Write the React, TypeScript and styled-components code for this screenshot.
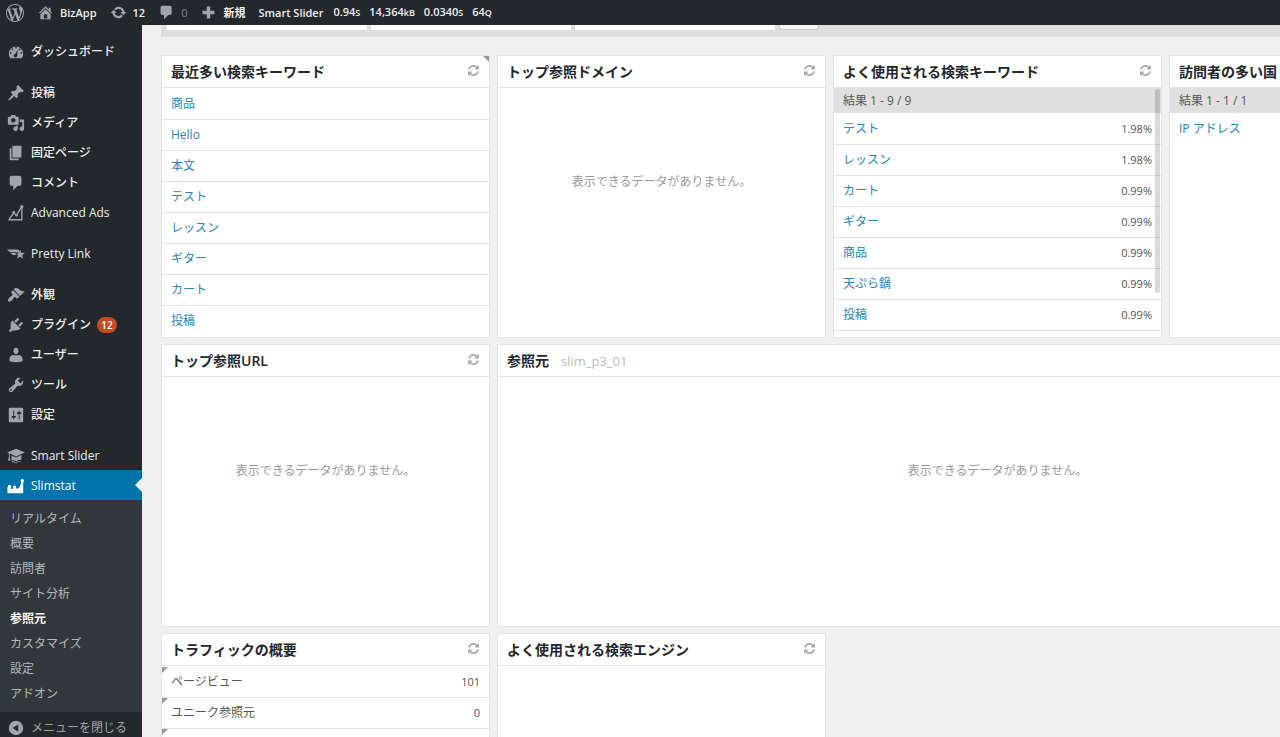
import React from 'react';
import styled, { createGlobalStyle, css } from 'styled-components';

const Global = createGlobalStyle`
  *, *::before, *::after { box-sizing: border-box; }
  html, body, #root { height: 100%; }
  body {
    margin: 0;
    background: #f0f0f0;
    color: #555;
    font: 12px/18px "Open Sans", "Noto Sans CJK JP", sans-serif;
    overflow: hidden;
  }
  ul, h2, p { margin: 0; padding: 0; list-style: none; }
  a { text-decoration: none; color: inherit; }
  button { font: inherit; color: inherit; background: none; border: 0; padding: 0; cursor: pointer; }
`;

const Page = styled.div`
  display: flex;
  flex-direction: column;
  height: 100vh;
`;

const AdminBar = styled.nav`
  flex: none;
  display: flex;
  align-items: center;
  height: 25px;
  padding-left: 6px;
  background: #23282d;
  color: #eee;
  font-weight: 600;
  font-size: 11px;
  white-space: nowrap;
`;

const BarLink = styled.a<{ $gap?: number; $dim?: boolean }>`
  display: flex;
  align-items: center;
  gap: 6px;
  height: 25px;
  margin-right: ${(p) => p.$gap ?? 13}px;
  ${(p) => p.$dim && css`color: #82878c; font-weight: 400;`}
`;

const Stats = styled.a`
  display: flex;
  gap: 9px;
  small { font-size: 9px; }
`;

const Glyph = styled.svg<{ $size?: number }>`
  flex: none;
  display: block;
  width: ${(p) => p.$size ?? 18}px;
  height: ${(p) => p.$size ?? 18}px;
  fill: currentColor;
  color: ${(p) => p.color ?? '#a0a5aa'};
`;

const Body = styled.div`
  flex: 1;
  min-height: 0;
  display: flex;
`;

const Sidebar = styled.nav`
  flex: none;
  width: 142px;
  padding-top: 11px;
  background: #23282d;
  color: #eee;
  overflow: hidden;
`;

const MenuGroup = styled.ul`
  margin-bottom: 11px;
  &:last-child { margin-bottom: 0; }
`;

const MenuLink = styled.a<{ $active?: boolean }>`
  position: relative;
  display: flex;
  align-items: center;
  gap: 6px;
  height: 30px;
  padding: 2px 0 0 7px;
  font-weight: 500;
  white-space: nowrap;
  ${(p) =>
    p.$active &&
    css`
      background: #0073aa;
      color: #fff;
      &::after {
        content: '';
        position: absolute;
        right: 0;
        top: 8px;
        border: 7px solid transparent;
        border-left-width: 0;
        border-right-color: #f0f0f0;
      }
    `}
`;

const Badge = styled.span`
  min-width: 20px;
  height: 16px;
  border-radius: 8px;
  background: #ca4a1f;
  color: #fff;
  font-size: 10px;
  font-weight: 600;
  line-height: 16px;
  text-align: center;
`;

const SubMenu = styled.ul`
  padding: 6px 0 6px 10px;
  background: #32373c;
  color: #b4b9be;
`;

const SubLink = styled.a<{ $current?: boolean }>`
  display: block;
  line-height: 25px;
  ${(p) => p.$current && css`color: #fff; font-weight: 700;`}
`;

const Collapse = styled.button`
  display: flex;
  align-items: center;
  gap: 6px;
  width: 100%;
  height: 32px;
  padding-left: 7px;
  color: #a0a5aa;
  white-space: nowrap;
`;

const Content = styled.main`
  flex: 1;
  min-width: 0;
  padding-left: 19px;
  overflow: hidden;
`;

const FilterBar = styled.form`
  display: flex;
  align-items: flex-start;
  gap: 4px;
  height: 12px;
  padding-left: 6px;
  margin-bottom: 18px;
  background: #dfdfdf;
`;

const FilterField = styled.input`
  width: 200px;
  height: 5px;
  border: 0;
  background: #fff;
`;

const FilterButton = styled.button`
  width: 40px;
  height: 5px;
  border: 1px solid #ccc;
  border-top: 0;
  border-radius: 0 0 3px 3px;
  background: #f7f7f7;
`;

const Board = styled.div`
  display: grid;
  grid-template-columns: repeat(4, 329px);
  grid-auto-rows: 283px;
  gap: 6px 7px;
`;

const Card = styled.section<{ $wide?: boolean }>`
  position: relative;
  display: flex;
  flex-direction: column;
  border: 1px solid #e5e5e5;
  background: #fff;
  overflow: hidden;
  grid-column: span ${(p) => (p.$wide ? 3 : 1)};
`;

const CardHead = styled.header`
  flex: none;
  display: flex;
  align-items: center;
  justify-content: space-between;
  height: 32px;
  padding: 0 10px 0 9px;
  border-bottom: 1px solid #e5e5e5;
`;

const CardTitle = styled.h2`
  font-size: 14px;
  line-height: 20px;
  font-weight: 600;
  color: #23282d;
  white-space: nowrap;
  span { margin-left: 12px; font-size: 13px; color: #bbb; font-weight: 500; }
`;

const Refresh = styled.button`
  padding-bottom: 3px;
`;

const Corner = styled.i<{ $left?: boolean }>`
  position: absolute;
  top: 0;
  ${(p) => (p.$left ? 'left: 0;' : 'right: 0;')}
  border-top: 6px solid #999;
  ${(p) => (p.$left ? 'border-right' : 'border-left')}: 6px solid transparent;
`;

const Results = styled.p`
  flex: none;
  height: 25px;
  padding-left: 9px;
  line-height: 25px;
  background: #dfdfdf;
`;

const Empty = styled.p`
  margin-top: 85px;
  text-align: center;
  color: #999;
`;

const Rows = styled.ul`
  padding-top: 1px;
`;

const Row = styled.li`
  position: relative;
  display: flex;
  justify-content: space-between;
  height: 31px;
  padding: 0 9px;
  border-bottom: 1px solid #e5e5e5;
  line-height: 30px;
  a { color: #2a84b7; }
  &:only-child, &:nth-child(8) { border-bottom: 0; }
`;

const Value = styled.span`
  font-size: 11px;
`;

const Scroll = styled.i`
  position: absolute;
  top: 33px;
  right: 1px;
  width: 5px;
  height: 204px;
  border-radius: 3px;
  background: rgba(0, 0, 0, 0.15);
`;

type IconName = keyof typeof paths;

/* Drawn on a 20-unit grid */
const paths = {
  dashboard: 'M3.76 17h12.48A8 8 0 1 0 3.76 17zM10 4a1 1 0 1 1 0 2 1 1 0 0 1 0-2zM6 6a1 1 0 1 1 0 2 1 1 0 0 1 0-2zm8 0a1 1 0 1 1 0 2 1 1 0 0 1 0-2zm-2.6 7.4a2 2 0 1 1-1.9-1.4l2.5-5-.6 5.5c.3.3.2.6 0 .9zM4 10a1 1 0 1 1 0 2 1 1 0 0 1 0-2zm12 0a1 1 0 1 1 0 2 1 1 0 0 1 0-2z',
  pin: 'M10.44 3.02l1.82-1.82 6.36 6.35-1.83 1.82c-1.05-.68-2.48-.57-3.41.36l-.75.75c-.92.93-1.04 2.35-.35 3.41l-1.83 1.82-2.41-2.41-2.8 2.79c-.42.42-3.38 2.71-3.8 2.29s1.86-3.39 2.28-3.81l2.79-2.79L4.1 9.36l1.83-1.82c1.05.69 2.48.57 3.4-.36l.75-.75c.93-.92 1.05-2.35.36-3.41z',
  media: 'M13 11V4c0-.55-.45-1-1-1h-1.67L9 1H5L3.67 3H2c-.55 0-1 .45-1 1v7c0 .55.45 1 1 1h10c.55 0 1-.45 1-1zM7 4.5c1.38 0 2.5 1.12 2.5 2.5S8.38 9.5 7 9.5 4.5 8.38 4.5 7 5.62 4.5 7 4.5zM14 6h5v10.5c0 1.38-1.12 2.5-2.5 2.5S14 17.88 14 16.5s1.12-2.5 2.5-2.5c.17 0 .34.02.5.05V9h-3V6zm-4 8.05V13h2v3.5c0 1.38-1.12 2.5-2.5 2.5S7 17.88 7 16.5 8.12 14 9.5 14c.17 0 .34.02.5.05z',
  pages: 'M6 15V2h10v13H6zm-1 1h8v2H3V5h2v11z',
  comment: 'M5 2h9c1.1 0 2 .9 2 2v7c0 1.1-.9 2-2 2h-2l-5 5v-5H5c-1.1 0-2-.9-2-2V4c0-1.1.9-2 2-2z',
  brush: 'M14.48 11.06L7.41 3.99l1.5-1.5c.5-.56 2.3-.47 3.51.32 1.21.8 1.43 1.28 2.91 2.1 1.18.64 2.45 1.26 4.45.85zm-.71.71L6.7 4.7 4.93 6.47c-.39.39-.39 1.02 0 1.41l1.06 1.06c.39.39.39 1.03 0 1.42-.6.6-1.43 1.11-2.21 1.69-.35.26-.7.53-1.01.84C1.43 14.23.4 16.08 1.4 17.07c.99 1 2.84-.03 4.18-1.36.31-.31.58-.66.85-1.02.57-.78 1.08-1.61 1.69-2.21.39-.39 1.02-.39 1.41 0l1.06 1.06c.39.39 1.02.39 1.41 0z',
  plug: 'M13.11 4.36L9.87 7.6 8 5.73l3.24-3.24c.35-.34 1.05-.2 1.56.32.52.51.66 1.21.31 1.55zm-8 1.77l.91-1.12 9.01 9.01-1.19.84c-.71.71-2.63 1.16-3.82 1.16H6.14L4.9 17.26c-.59.59-1.54.59-2.12 0-.59-.58-.59-1.53 0-2.12l1.24-1.24v-3.88c0-1.13.4-3.19 1.09-3.89zm7.26 3.97l3.24-3.24c.34-.35 1.04-.21 1.55.31.52.51.66 1.21.31 1.55l-3.24 3.25z',
  user: 'M10 9.25c-2.27 0-2.73-3.44-2.73-3.44C7 4.02 7.82 2 9.97 2c2.16 0 2.98 2.02 2.71 3.81 0 0-.41 3.44-2.68 3.44zm0 1.2L12.72 10c2.39 0 4.52 2.33 4.52 4.53v2.49s-3.65 1.13-7.24 1.13c-3.65 0-7.24-1.13-7.24-1.13v-2.49c0-2.25 1.94-4.48 4.47-4.48z',
  wrench: 'M16.68 9.77c-1.34 1.34-3.3 1.67-4.95.99l-5.41 6.52c-.99.99-2.59.99-3.58 0s-.99-2.59 0-3.57l6.52-5.42c-.68-1.65-.35-3.61.99-4.95 1.28-1.28 3.12-1.62 4.72-1.06l-2.89 2.89 2.82 2.82 2.86-2.87c.53 1.58.18 3.39-1.08 4.65zM3.81 16.21c.4.39 1.04.39 1.43 0 .4-.4.4-1.04 0-1.43-.39-.4-1.03-.4-1.43 0-.39.39-.39 1.03 0 1.43z',
  sliders: 'M18 17V3c0-.55-.45-1-1-1H3c-.55 0-1 .45-1 1v14c0 .55.45 1 1 1h14c.55 0 1-.45 1-1zM8 11h1c.55 0 1 .45 1 1s-.45 1-1 1H8v1.5c0 .28-.22.5-.5.5s-.5-.22-.5-.5V13H6c-.55 0-1-.45-1-1s.45-1 1-1h1V5.5c0-.28.22-.5.5-.5s.5.22.5.5V11zm5-2h-1c-.55 0-1-.45-1-1s.45-1 1-1h1V5.5c0-.28.22-.5.5-.5s.5.22.5.5V7h1c.55 0 1 .45 1 1s-.45 1-1 1h-1v5.5c0 .28-.22.5-.5.5s-.5-.22-.5-.5V9z',
  cap: 'M10 2L0 6l2 .9v4.6L1 15h3l-1-3.5V7.3l7 3.2 10-4.5zM5 9.5V15c3-1 5 0 5.5 1.5C11 15 13.5 13.8 16 14.5V9l-6 2.8zM5.5 16c2-.5 3.5 0 4.5 1.7 1.2-1.7 3-2.2 5-1.9v1c-2-.3-3.8.3-5 1.7-1-1.3-2.5-1.8-4.5-1.5z',
  wing: 'M0 5h10.5c1.6 0 2.6.5 3.2 1.5l-.6 1.6H3.4zM4 9h8.6l-.3.8H9l1.4 1.2H6.2zM14.6 5.2l1.4 3.4 3.9.3-3 2.4 1 3.9-3.3-2.1-3.4 2.1 1-3.8-2.9-2.5 3.9-.3z',
  slim: 'M1 10.5a1.9 1.9 0 1 1 3 1.6c.8 1.4 1.6 1.6 2.6.6L7 12c-.6-1.400.2-2.600 1.400-2.600 1.600 0 2.100 1.600 1.300 2.600.8 1.200 2 1.400 3 .6 1.600-1.400 2.800-4.200 3.100-7A1.900 1.900 0 1 1 18 5.800V18H.5v-6.200z',
  home: 'M16 8.5l1.53 1.53-1.06 1.06L10 4.6l-6.47 6.49-1.06-1.06L10 2.500l4 4v-2h2v4zm-6-2.46l6 5.99V18H4v-5.97zM12 17v-5H8v5h4z',
  update: 'M10.2 3.28c3.53 0 6.43 2.61 6.92 6h2.08l-3.5 4-3.5-4h2.32c-.45-1.97-2.21-3.45-4.32-3.45-1.45 0-2.73.71-3.54 1.78L4.95 5.66C6.23 4.2 8.11 3.28 10.2 3.28zm-.4 13.44c-3.52 0-6.43-2.61-6.92-6H.8l3.5-4c1.17 1.33 2.33 2.67 3.5 4H5.48c.45 1.97 2.21 3.45 4.32 3.45 1.45 0 2.73-.71 3.54-1.78l1.71 1.95c-1.28 1.46-3.15 2.38-5.25 2.38z',
  plus: 'M17 8v4h-5v5H8v-5H3V8h5V3h4v5z',
  collapse: 'M10 2a8 8 0 1 0 0 16 8 8 0 0 0 0-16zm2.500 4v8L6 10z',
  wordpress: 'M20 10c0-5.51-4.49-10-10-10C4.48 0 0 4.49 0 10c0 5.52 4.48 10 10 10 5.51 0 10-4.48 10-10zM7.78 15.37L4.37 6.22c.55-.02 1.17-.08 1.17-.08.5-.06.44-1.13-.06-1.11 0 0-1.45.11-2.37.11-.18 0-.37 0-.58-.01C4.12 2.69 6.87 1.11 10 1.11c2.33 0 4.45.87 6.05 2.34-.68-.11-1.65.39-1.65 1.58 0 .74.45 1.36.9 2.1.35.61.55 1.36.55 2.46 0 1.49-1.4 5-1.4 5l-3.03-8.37c.54-.02.82-.17.82-.17.5-.05.44-1.25-.06-1.22 0 0-1.44.12-2.38.12-.87 0-2.33-.12-2.33-.12-.5-.03-.56 1.2-.06 1.22l.92.08 1.26 3.41zM17.41 10c.24-.64.74-1.87.43-4.25.7 1.29 1.05 2.71 1.05 4.25 0 3.29-1.73 6.24-4.4 7.78.97-2.59 1.94-5.2 2.92-7.78zM6.1 18.09C3.12 16.65 1.11 13.53 1.11 10c0-1.3.23-2.48.72-3.59C3.25 10.3 4.67 14.2 6.1 18.09zm4.03-6.63l2.58 6.98c-.86.29-1.76.45-2.71.45-.79 0-1.57-.11-2.29-.33.81-2.38 1.62-4.74 2.42-7.1z',
};

const Icon = ({ name, size, color }: { name: IconName; size?: number; color?: string }) => (
  <Glyph viewBox="0 0 20 20" $size={size} color={color} aria-hidden="true">
    <path d={paths[name]} fillRule="evenodd" />
  </Glyph>
);

const AdsIcon = () => (
  <Glyph viewBox="0 0 20 20" $size={18} aria-hidden="true">
    <path d="M16.5 4v13.500H2.500L3 16l4.500-6 3 2.500L16.500 3" fill="none" stroke="currentColor" strokeWidth="1.5" />
    <circle cx="16.5" cy="3" r="1.8" />
    <circle cx="7.5" cy="9.5" r="1.6" />
    <circle cx="10.5" cy="12.5" r="1.5" />
  </Glyph>
);

const RefreshButton = () => (
  <Refresh type="button" aria-label="更新">
    <Glyph viewBox="0 0 1536 1536" $size={11} color="#aaa" aria-hidden="true">
      <path d="M1511 928q0 5-1 7-64 268-268 434.500T764 1536q-146 0-282.500-55T238 1324l-129 129q-19 19-45 19t-45-19-19-45V960q0-26 19-45t45-19h448q26 0 45 19t19 45-19 45l-137 137q71 66 161 102t187 36q134 0 250-65t186-179q11-17 53-117 8-23 30-23h192q13 0 22.500 9.500t9.500 22.500zm25-800v448q0 26-19 45t-45 19h-448q-26 0-45-19t-19-45 19-45l138-138Q969 256 768 256q-134 0-250 65T332 500q-11 17-53 117-8 23-30 23H50q-13 0-22.500-9.500T18 608v-7q65-268 270-434.500T768 0q146 0 284 55.500T1297 212l130-129q19-19 45-19t45 19 19 45z" />
    </Glyph>
  </Refresh>
);

const groups: { label: string; icon: IconName | 'ads'; badge?: number; active?: boolean }[][] = [
  [{ label: 'ダッシュボード', icon: 'dashboard' }],
  [
    { label: '投稿', icon: 'pin' },
    { label: 'メディア', icon: 'media' },
    { label: '固定ページ', icon: 'pages' },
    { label: 'コメント', icon: 'comment' },
    { label: 'Advanced Ads', icon: 'ads' },
  ],
  [{ label: 'Pretty Link', icon: 'wing' }],
  [
    { label: '外観', icon: 'brush' },
    { label: 'プラグイン', icon: 'plug', badge: 12 },
    { label: 'ユーザー', icon: 'user' },
    { label: 'ツール', icon: 'wrench' },
    { label: '設定', icon: 'sliders' },
  ],
  [
    { label: 'Smart Slider', icon: 'cap' },
    { label: 'Slimstat', icon: 'slim', active: true },
  ],
];

const submenu = ['リアルタイム', '概要', '訪問者', 'サイト分析', '参照元', 'カスタマイズ', '設定', 'アドオン'];
const recent = ['商品', 'Hello', '本文', 'テスト', 'レッスン', 'ギター', 'カート', '投稿'];
const popular = [
  ['テスト', '1.98%'],
  ['レッスン', '1.98%'],
  ['カート', '0.99%'],
  ['ギター', '0.99%'],
  ['商品', '0.99%'],
  ['天ぷら鍋', '0.99%'],
  ['投稿', '0.99%'],
];
const traffic = [
  ['ページビュー', '101'],
  ['ユニーク参照元', '0'],
];

const Report = ({ title, note, wide, corner, children }: {
  title: string;
  note?: string;
  wide?: boolean;
  corner?: boolean;
  children?: React.ReactNode;
}) => (
  <Card $wide={wide}>
    <CardHead>
      <CardTitle>
        {title}
        {note && <span>{note}</span>}
      </CardTitle>
      <RefreshButton />
    </CardHead>
    {corner && <Corner />}
    {children}
  </Card>
);

const NoData = () => <Empty>表示できるデータがありません。</Empty>;

export default function App() {
  return (
    <Page>
      <Global />
      <AdminBar>
        <BarLink href="#" aria-label="WordPress"><Icon name="wordpress" /></BarLink>
        <BarLink href="#"><Icon name="home" size={17} />BizApp</BarLink>
        <BarLink href="#"><Icon name="update" size={17} />12</BarLink>
        <BarLink href="#" $dim><Icon name="comment" size={17} />0</BarLink>
        <BarLink href="#"><Icon name="plus" size={17} />新規</BarLink>
        <BarLink href="#" $gap={10}>Smart Slider</BarLink>
        <Stats href="#">
          <span>0.94<small>S</small></span>
          <span>14,364<small>kB</small></span>
          <span>0.0340<small>S</small></span>
          <span>64<small>Q</small></span>
        </Stats>
      </AdminBar>
      <Body>
        <Sidebar>
          {groups.map((items, i) => (
            <MenuGroup key={i}>
              {items.map((item) => (
                <li key={item.label}>
                  <MenuLink href="#" $active={item.active}>
                    {item.icon === 'ads' ? <AdsIcon /> : <Icon name={item.icon} color={item.active ? '#fff' : undefined} />}
                    {item.label}
                    {item.badge && <Badge>{item.badge}</Badge>}
                  </MenuLink>
                  {item.active && (
                    <SubMenu>
                      {submenu.map((s) => (
                        <li key={s}><SubLink href="#" $current={s === '参照元'}>{s}</SubLink></li>
                      ))}
                    </SubMenu>
                  )}
                </li>
              ))}
              {i === groups.length - 1 && (
                <li><Collapse type="button"><Icon name="collapse" />メニューを閉じる</Collapse></li>
              )}
            </MenuGroup>
          ))}
        </Sidebar>
        <Content>
          <FilterBar>
            <FilterField aria-label="フィルター" />
            <FilterField aria-label="条件" />
            <FilterField aria-label="値" />
            <FilterButton type="button" aria-label="適用" />
          </FilterBar>
          <Board>
            <Report title="最近多い検索キーワード" corner>
              <Rows>{recent.map((k) => <Row key={k}><a href="#">{k}</a></Row>)}</Rows>
            </Report>
            <Report title="トップ参照ドメイン"><NoData /></Report>
            <Report title="よく使用される検索キーワード">
              <Results>結果 1 - 9 / 9</Results>
              <Rows>{popular.map(([k, v]) => <Row key={k}><a href="#">{k}</a><Value>{v}</Value></Row>)}</Rows>
              <Scroll />
            </Report>
            <Report title="訪問者の多い国">
              <Results>結果 1 - 1 / 1</Results>
              <Rows><Row><a href="#">IP アドレス</a></Row></Rows>
            </Report>
            <Report title="トップ参照URL"><NoData /></Report>
            <Report title="参照元" note="slim_p3_01" wide><NoData /></Report>
            <Report title="トラフィックの概要">
              <Rows>
                {traffic.map(([k, v]) => <Row key={k}><Corner $left />{k}<Value>{v}</Value></Row>)}
                <Row><Corner $left /></Row>
              </Rows>
            </Report>
            <Report title="よく使用される検索エンジン" />
          </Board>
        </Content>
      </Body>
    </Page>
  );
}
